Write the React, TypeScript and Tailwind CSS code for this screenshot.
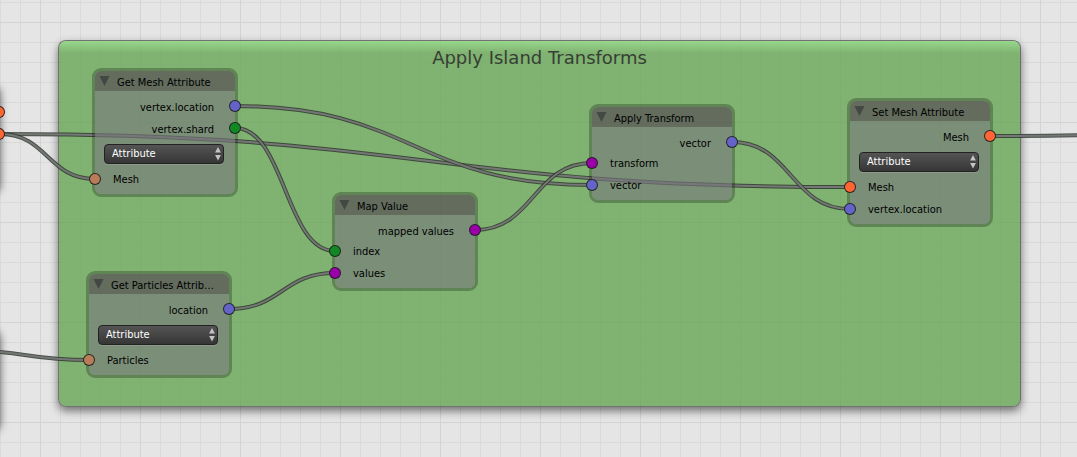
import React from "react";

type Tone = "mesh" | "meshFaded" | "vector" | "index" | "list";

type Port = { label: string; tone: Tone };

type NodeData = {
  id: string;
  title: string;
  place: string;
  outputs: Port[];
  inputs: Port[];
  picker?: boolean;
};

const toneClass: Record<Tone, string> = {
  mesh: "bg-[#ff6633]",
  meshFaded: "bg-[#b87d58]",
  vector: "bg-[#6464c8]",
  index: "bg-[#118824]",
  list: "bg-[#9900a8]",
};

const nodes: NodeData[] = [
  {
    id: "get-mesh",
    title: "Get Mesh Attribute",
    place: "left-[92px] top-[68px]",
    outputs: [
      { label: "vertex.location", tone: "vector" },
      { label: "vertex.shard", tone: "index" },
    ],
    inputs: [{ label: "Mesh", tone: "meshFaded" }],
    picker: true,
  },
  {
    id: "get-particles",
    title: "Get Particles Attrib…",
    place: "left-[86px] top-[271px]",
    outputs: [{ label: "location", tone: "vector" }],
    inputs: [{ label: "Particles", tone: "meshFaded" }],
    picker: true,
  },
  {
    id: "map-value",
    title: "Map Value",
    place: "left-[332px] top-[192px]",
    outputs: [{ label: "mapped values", tone: "list" }],
    inputs: [
      { label: "index", tone: "index" },
      { label: "values", tone: "list" },
    ],
  },
  {
    id: "apply-transform",
    title: "Apply Transform",
    place: "left-[589px] top-[104px]",
    outputs: [{ label: "vector", tone: "vector" }],
    inputs: [
      { label: "transform", tone: "list" },
      { label: "vector", tone: "vector" },
    ],
  },
  {
    id: "set-mesh",
    title: "Set Mesh Attribute",
    place: "left-[847px] top-[98px]",
    outputs: [{ label: "Mesh", tone: "mesh" }],
    inputs: [
      { label: "Mesh", tone: "mesh" },
      { label: "vertex.location", tone: "vector" },
    ],
    picker: true,
  },
];

const links: [number, number, number, number][] = [
  [0, 134, 850, 187],
  [0, 134, 95, 179],
  [235, 106, 592, 185],
  [235, 128, 335, 251],
  [229, 309, 335, 273],
  [475, 230, 592, 163],
  [732, 142, 850, 209],
  [990, 136, 1300, 131],
  [-40, 350, 89, 360],
];

function linkPath([x1, y1, x2, y2]: [number, number, number, number]) {
  const reach = Math.abs(x2 - x1) / 2;
  return `M${x1} ${y1}C${x1 + reach} ${y1} ${x2 - reach} ${y2} ${x2} ${y2}`;
}

function Socket({ tone, side }: { tone: Tone; side: "left" | "right" }) {
  return (
    <span
      className={`absolute top-1 size-3 rounded-full border border-[#1c1c1c]/90 ${
        side === "left" ? "-left-1.5" : "-right-1.5"
      } ${toneClass[tone]}`}
    />
  );
}

function Picker() {
  return (
    <div className="relative mt-1.5 mr-[11px] ml-[9px] h-5">
      <select
        aria-label="Attribute"
        className="block h-5 w-full appearance-none rounded border border-[#222] bg-linear-to-b from-[#545454] to-[#363636] pl-[7px] text-[11px] leading-[18px] text-white shadow-[0_1px_0_rgba(255,255,255,0.12)]"
      >
        <option>Attribute</option>
      </select>
      <svg
        viewBox="0 0 6 14"
        className="pointer-events-none absolute top-[3px] right-[3px] h-3.5 w-1.5 fill-[#c4c4c4]"
      >
        <path d="M3 0L5.9 5.6H.1ZM3 13.6L.1 8H5.9Z" />
      </svg>
    </div>
  );
}

function NodeCard({ node }: { node: NodeData }) {
  return (
    <section
      className={`absolute w-[146px] rounded-[9px] border-3 border-black/25 bg-clip-padding text-[11px] leading-5 text-black ${node.place}`}
    >
      <header className="flex h-5 items-start gap-[7px] rounded-t-md bg-[#544854]/66 pl-1">
        <button
          type="button"
          aria-label={`Collapse ${node.title}`}
          className="flex h-5 w-[11px] shrink-0 items-center"
        >
          <svg viewBox="0 0 11 10" className="h-2.5 w-[11px] fill-[#444844]">
            <path d="M.5 0H10.5L5.5 10Z" />
          </svg>
        </button>
        <h2 className="pt-0.5 whitespace-nowrap">{node.title}</h2>
      </header>
      <div className="rounded-b-md bg-[#77787c]/62 pt-[5px] pb-[5px]">
        <ul className="flex flex-col gap-0.5">
          {node.outputs.map((port) => (
            <li key={port.label} className="relative h-5 pt-0.5 pr-[21px] text-right">
              {port.label}
              <Socket tone={port.tone} side="right" />
            </li>
          ))}
        </ul>
        {node.picker && <Picker />}
        <ul className={`flex flex-col gap-0.5 ${node.picker ? "mt-[5px]" : "mt-px"}`}>
          {node.inputs.map((port) => (
            <li key={port.label} className="relative h-5 pt-px pl-[18px]">
              {port.label}
              <Socket tone={port.tone} side="left" />
            </li>
          ))}
        </ul>
      </div>
    </section>
  );
}

export default function App() {
  return (
    <main className="relative h-screen w-full overflow-hidden bg-[#e5e5e5] font-['DejaVu_Sans_Condensed','DejaVu_Sans',sans-serif]">
      <div className="absolute inset-0 bg-[linear-gradient(to_right,#d3d3d3_1px,transparent_1px),linear-gradient(to_bottom,#d3d3d3_1px,transparent_1px),linear-gradient(to_right,#dadada_1px,transparent_1px),linear-gradient(to_bottom,#dadada_1px,transparent_1px)] bg-size-[100px_100px,100px_100px,20px_20px,20px_20px] bg-position-[40px_22px,40px_22px,0px_2px,0px_2px]" />

      <div className="absolute top-[84px] -left-36 h-[106px] w-36 rounded-lg bg-[#888] shadow-[0_3px_8px_rgba(0,0,0,0.6)]" />
      <div className="absolute top-[328px] -left-36 h-[100px] w-36 rounded-lg bg-[#888] shadow-[0_3px_8px_rgba(0,0,0,0.6)]" />

      <div className="absolute top-10 left-[58px] h-[367px] w-[963px] rounded-lg border border-black/50 bg-[#66a554]/80 bg-clip-padding shadow-[0_4px_8px_rgba(0,0,0,0.5)]">
        <div className="h-3 rounded-t-[7px] bg-linear-to-b from-[#a5ec9b]/65 to-transparent" />
        <h1 className="-mt-[7px] text-center font-['DejaVu_Sans',sans-serif] text-lg leading-6 text-[#363f34]">
          Apply Island Transforms
        </h1>
      </div>

      <svg className="absolute inset-0 size-full fill-none">
        {links.map((link) => (
          <g key={link.join("-")}>
            <path d={linkPath(link)} className="stroke-[#303630]/85" strokeWidth="4" />
            <path d={linkPath(link)} className="stroke-[#747874]" strokeWidth="2" />
          </g>
        ))}
      </svg>

      <span className="absolute top-[106px] -left-[7px] size-3 rounded-full border border-[#1c1c1c]/90 bg-[#ff6633]" />
      <span className="absolute top-32 -left-[7px] size-3 rounded-full border border-[#1c1c1c]/90 bg-[#ff6633]" />

      {nodes.map((node) => (
        <NodeCard key={node.id} node={node} />
      ))}
    </main>
  );
}
